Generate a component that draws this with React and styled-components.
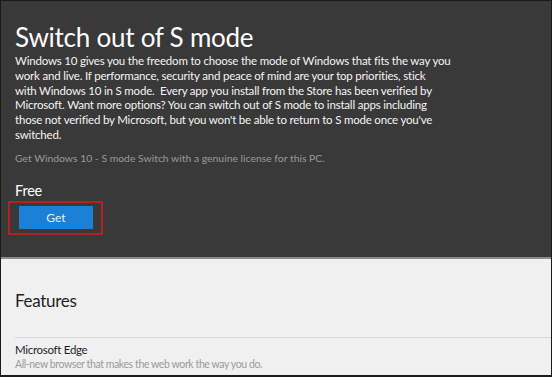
import styled, { createGlobalStyle } from "styled-components"

const GlobalStyle = createGlobalStyle`
  html, body {
    margin: 0;
    padding: 0;
    background: #f0f0f0;
  }
  body {
    font-family: Lato, "Noto Sans", sans-serif;
  }
`

const Frame = styled.div`
  width: 552px;
  height: 377px;
  box-sizing: border-box;
  border: 1px solid #1a1a1a;
  border-bottom-width: 2px;
  overflow: hidden;
  display: flex;
  flex-direction: column;
  background: #f0f0f0;
`

const Hero = styled.section`
  background: #393939;
  height: 258px;
  padding: 19px 14px 0;
  box-sizing: border-box;
  border-bottom: 2px solid #8a8a8a;
  color: #fff;
`

const Title = styled.h1`
  margin: 0;
  font-size: 26px;
  font-weight: 400;
  letter-spacing: -0.25px;
  line-height: 34px;
`

const Description = styled.p`
  margin: 0;
  white-space: nowrap;
  font-size: 11.5px;
  letter-spacing: -0.2px;
  line-height: 14.8px;
  color: #f4f4f4;
`

const Licence = styled.p`
  margin: 8px 0 0;
  font-size: 10.4px;
  line-height: 14px;
  color: #9a9a9a;
`

const Price = styled.div`
  margin-top: 17px;
  font-size: 14.5px;
  letter-spacing: -0.2px;
  line-height: 18px;
`

const Highlight = styled.div`
  margin: 1px 0 0 -7px;
  width: 95px;
  height: 34px;
  box-sizing: border-box;
  border: 2px solid #b3202a;
  display: flex;
  align-items: center;
  justify-content: center;
`

const GetButton = styled.button`
  width: 74px;
  height: 23px;
  border: none;
  background: #1b80d6;
  color: #e6f2ff;
  font-family: inherit;
  font-size: 12px;
  padding: 0;
  margin-left: 1px;
`

const Details = styled.section`
  padding: 30px 0 0 14px;
`

const SectionTitle = styled.h2`
  margin: 0;
  font-size: 17px;
  letter-spacing: -0.3px;
  font-weight: 400;
  color: #1f1f1f;
  line-height: 24px;
  padding-bottom: 24px;
  border-bottom: 1px solid #d9d9d9;
`

const Feature = styled.div`
  padding-top: 4px;
`

const FeatureName = styled.div`
  font-size: 11.5px;
  letter-spacing: -0.3px;
  line-height: 15px;
  color: #1f1f1f;
`

const FeatureText = styled.div`
  font-size: 10.5px;
  letter-spacing: -0.4px;
  line-height: 15px;
  color: #9a9a9a;
`

const lines = [
  "Windows 10 gives you the freedom to choose the mode of Windows that fits the way you",
  "work and live. If performance, security and peace of mind are your top priorities, stick",
  "with Windows 10 in S mode.\u00a0 Every app you install from the Store has been verified by",
  "Microsoft. Want more options? You can switch out of S mode to install apps including",
  "those not verified by Microsoft, but you won't be able to return to S mode once you've",
  "switched.",
]

function App() {
  return (
    <>
      <GlobalStyle />
      <Frame>
        <Hero>
          <Title>Switch out of S mode</Title>
          <Description>
            {lines.map((line, i) => (
              <span key={i}>
                {line}
                {i < lines.length - 1 && <br />}
              </span>
            ))}
          </Description>
          <Licence>Get Windows 10 - S mode Switch with a genuine license for this PC.</Licence>
          <Price>Free</Price>
          <Highlight>
            <GetButton>Get</GetButton>
          </Highlight>
        </Hero>
        <Details>
          <SectionTitle>Features</SectionTitle>
          <Feature>
            <FeatureName>Microsoft Edge</FeatureName>
            <FeatureText>All-new browser that makes the web work the way you do.</FeatureText>
          </Feature>
        </Details>
      </Frame>
    </>
  )
}

export default App
